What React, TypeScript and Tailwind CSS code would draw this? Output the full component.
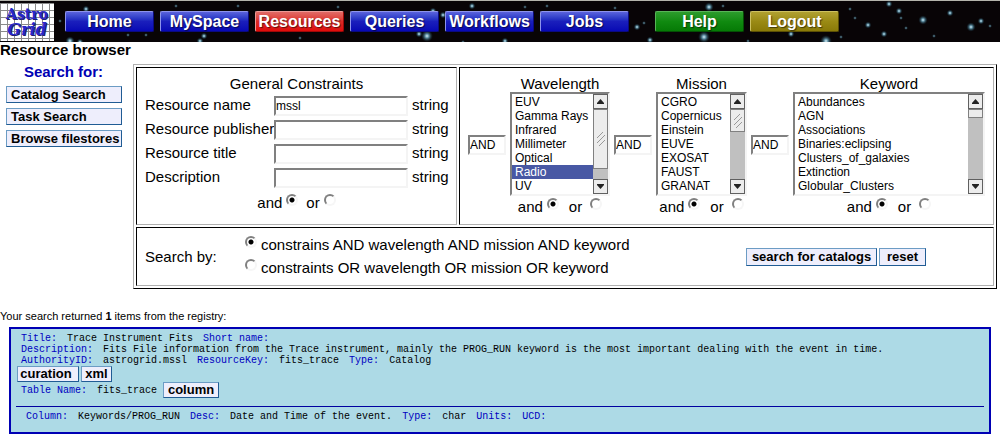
import React from "react";

type NavItem = { label: string; tone: "blue" | "red" | "green" | "gold" };

const TONES: Record<NavItem["tone"], string> = {
  blue: "from-[#5a62dc] via-[#1a1ebc] to-[#0808b4] border-t-[#8d93ec] border-l-[#8d93ec] border-r-[#0a0a80] border-b-[#0a0a80]",
  red: "from-[#e06a66] via-[#dc2a26] to-[#e00a0a] border-t-[#ec9a96] border-l-[#ec9a96] border-r-[#a00808] border-b-[#a00808]",
  green: "from-[#2c9c2c] via-[#108a10] to-[#067a06] border-t-[#58b458] border-l-[#58b458] border-r-[#045004] border-b-[#045004]",
  gold: "from-[#b0a030] via-[#9a8a14] to-[#8a7a08] border-t-[#ccc060] border-l-[#ccc060] border-r-[#5c5004] border-b-[#5c5004]",
};

const MAIN_NAV: NavItem[] = [
  { label: "Home", tone: "blue" },
  { label: "MySpace", tone: "blue" },
  { label: "Resources", tone: "red" },
  { label: "Queries", tone: "blue" },
  { label: "Workflows", tone: "blue" },
  { label: "Jobs", tone: "blue" },
];

const SIDE_NAV: NavItem[] = [
  { label: "Help", tone: "green" },
  { label: "Logout", tone: "gold" },
];

const STARS: [number, number, number][] = [
  [86, 8, 2], [70, 40, 3], [80, 41, 2], [128, 34, 1], [146, 34, 1], [176, 5, 1], [200, 40, 2], [204, 35, 2],
  [238, 5, 1], [300, 37, 1], [338, 6, 1], [433, 10, 2], [443, 14, 2], [427, 35, 4], [419, 33, 2], [472, 5, 2],
  [463, 41, 1], [505, 40, 2], [525, 6, 1], [547, 5, 1], [615, 7, 1], [637, 26, 2], [650, 39, 2], [644, 22, 1],
  [709, 6, 3], [723, 5, 1], [704, 36, 4], [748, 40, 1], [791, 33, 2], [826, 40, 4], [841, 36, 1], [850, 8, 1],
  [868, 24, 2], [884, 33, 2], [889, 3, 2], [899, 10, 2], [901, 17, 1], [906, 27, 1], [923, 19, 3], [950, 12, 2],
  [971, 26, 3], [981, 20, 2], [990, 25, 1], [855, 17, 1], [934, 35, 1], [60, 20, 1],
];

function NavLink({ label, tone }: NavItem) {
  return (
    <a
      href="#"
      className={
        "flex h-[21px] w-[89px] items-center justify-center rounded-xs border bg-linear-to-b text-base leading-4 font-bold text-white [text-shadow:1px_1px_1px_#00000090] " +
        TONES[tone]
      }
    >
      {label}
    </a>
  );
}

function Header() {
  return (
    <header className="relative flex h-[42px] items-center overflow-hidden border-t border-[#b4b4ac] bg-[#080406]">
      <svg
        className="absolute inset-0 h-full w-full"
        viewBox="0 0 1000 41"
        preserveAspectRatio="xMidYMid slice"
        aria-hidden="true"
      >
        <defs>
          <radialGradient id="star">
            <stop offset="0" stopColor="#e4f8ff" />
            <stop offset="0.3" stopColor="#6a9fb4" />
            <stop offset="1" stopColor="#0c2c3c" stopOpacity="0" />
          </radialGradient>
        </defs>
        {STARS.map(([x, y, r]) => (
          <circle key={`${x}-${y}`} cx={x} cy={y} r={r * 1.3 + 0.8} fill="url(#star)" opacity={r < 2 ? 0.6 : 0.95} />
        ))}
      </svg>
      <a
        href="#"
        className="relative flex h-[38px] w-[54px] flex-col items-center justify-center bg-white bg-[linear-gradient(#8a8a8a_1px,transparent_1px),linear-gradient(90deg,#8a8a8a_1px,transparent_1px)] bg-size-[7px_7px] font-['DejaVu_Serif',serif] text-sm leading-4 font-bold text-[#2828cc] [text-shadow:1px_1px_0_#202070]"
      >
        <span>Astro</span>
        <span className="text-base leading-4 italic">Grid</span>
      </a>
      <nav className="relative flex gap-[26px] pl-[11px]">
        <div className="flex gap-1.5">
          {MAIN_NAV.map((n) => (
            <NavLink key={n.label} {...n} />
          ))}
        </div>
        <div className="flex gap-1.5">
          {SIDE_NAV.map((n) => (
            <NavLink key={n.label} {...n} />
          ))}
        </div>
      </nav>
    </header>
  );
}

const BUTTON =
  "border border-t-[#6c9cc4] border-l-[#6c9cc4] border-r-[#205c94] border-b-[#205c94] bg-[#eeeefc] font-bold text-black whitespace-nowrap";
const SUNKEN = "border-2 border-t-[#808080] border-l-[#808080] border-r-[#f4f4f4] border-b-[#f4f4f4] bg-white";
const CELL = "border border-t-black border-l-black border-r-[#b0b0b0] border-b-[#b0b0b0]";

function Radio({ name, value, on }: { name: string; value: string; on?: boolean }) {
  return (
    <input
      type="radio"
      name={name}
      value={value}
      defaultChecked={on}
      className="size-3 shrink-0 appearance-none rounded-full border-2 border-t-[#808080] border-l-[#808080] border-r-[#f6f6f6] border-b-[#f6f6f6] bg-white checked:bg-[radial-gradient(circle,#000_2px,transparent_3px)]"
    />
  );
}

function AndOr({ name, wide }: { name: string; wide?: boolean }) {
  return (
    <div className={"flex justify-center " + (wide ? "gap-2.5" : "gap-2")}>
      <label className="flex gap-1">
        and <Radio name={name} value="and" on />
      </label>
      <label className={"flex " + (wide ? "gap-2" : "gap-1")}>
        or <Radio name={name} value="or" />
      </label>
    </div>
  );
}

function ArrowButton({ down }: { down?: boolean }) {
  return (
    <div className="flex h-[15px] shrink-0 items-center justify-center border border-[#606060] bg-[#ececec]">
      <svg width="7" height="5" viewBox="0 0 7 5" aria-hidden="true">
        <path d={down ? "M0 0h7v1L3.5 5 0 1z" : "M3.5 0 7 4v1H0V4z"} fill="#222" />
      </svg>
    </div>
  );
}

function ScrollBar({ thumb }: { thumb: "large" | "medium" | "small" }) {
  const height = { large: "h-[60px]", medium: "h-[23px]", small: "h-[9px]" }[thumb];
  return (
    <div className="flex w-[15px] shrink-0 flex-col bg-[#c0c0c0]" aria-hidden="true">
      <ArrowButton />
      <div className={"flex items-center justify-center border border-[#808080] bg-[#ececec] " + height}>
        {thumb !== "small" && (
          <svg width="8" height="16" viewBox="0 0 8 16">
            <path d="M0 7 6 1M0 12 8 4M2 15 8 9" stroke="#999" fill="none" />
          </svg>
        )}
      </div>
      <div className="grow" />
      <ArrowButton down />
    </div>
  );
}

type ListProps = {
  title: string;
  options: string[];
  selected?: string;
  thumb: "large" | "medium" | "small";
  className: string;
};

function ListColumn({ title, options, selected, thumb, className }: ListProps) {
  const id = title.toLowerCase();
  return (
    <div className={"flex min-w-0 flex-col " + className}>
      <label htmlFor={id} className="text-center leading-4">
        {title}
      </label>
      <div className={"flex h-[104px] " + SUNKEN}>
        <select
          id={id}
          multiple
          size={7}
          defaultValue={selected ? [selected] : []}
          className="h-[100px] min-w-0 grow overflow-y-auto py-px text-xs [scrollbar-width:none]"
        >
          {options.map((o) => (
            <option
              key={o}
              className="h-3.5 min-h-0 px-[3px] py-0 leading-[14px] checked:bg-[linear-gradient(#4858a4,#4858a4)] checked:[-webkit-text-fill-color:#fff]"
            >
              {o}
            </option>
          ))}
        </select>
        <ScrollBar thumb={thumb} />
      </div>
      <div className="pt-0.5">
        <AndOr name={id + "-op"} wide />
      </div>
    </div>
  );
}

function Joiner({ label }: { label: string }) {
  return (
    <input
      aria-label={label}
      defaultValue="AND"
      className={"mt-[59px] h-5 w-[38px] shrink-0 text-xs " + SUNKEN}
    />
  );
}

const FIELDS: [string, string][] = [
  ["Resource name", "mssl"],
  ["Resource publisher", ""],
  ["Resource title", ""],
  ["Description", ""],
];

function Constraints() {
  return (
    <section className={"flex w-[321px] shrink-0 flex-col px-2 pt-2 pb-3 " + CELL}>
      <h2 className="text-center leading-4">General Constraints</h2>
      <div className="flex flex-col gap-1 pt-1">
        {FIELDS.map(([label, value]) => (
          <div key={label} className="flex h-5 gap-1 leading-[18px]">
            <label htmlFor={label} className="w-[125px] shrink-0 whitespace-nowrap">
              {label}
            </label>
            <input id={label} defaultValue={value} className={"h-5 w-[134px] shrink-0 text-xs " + SUNKEN} />
            <span>string</span>
          </div>
        ))}
      </div>
      <div className="pt-1.5">
        <AndOr name="general-op" />
      </div>
    </section>
  );
}

function Lists() {
  return (
    <section className={"flex min-w-0 grow gap-1 px-2 pt-2 " + CELL}>
      <Joiner label="Wavelength operator" />
      <ListColumn
        title="Wavelength"
        options={["EUV", "Gamma Rays", "Infrared", "Millimeter", "Optical", "Radio", "UV"]}
        selected="Radio"
        thumb="large"
        className="w-[100px] shrink-0"
      />
      <Joiner label="Mission operator" />
      <ListColumn
        title="Mission"
        options={["CGRO", "Copernicus", "Einstein", "EUVE", "EXOSAT", "FAUST", "GRANAT"]}
        thumb="medium"
        className="w-[91px] shrink-0"
      />
      <Joiner label="Keyword operator" />
      <ListColumn
        title="Keyword"
        options={[
          "Abundances",
          "AGN",
          "Associations",
          "Binaries:eclipsing",
          "Clusters_of_galaxies",
          "Extinction",
          "Globular_Clusters",
        ]}
        thumb="small"
        className="grow"
      />
    </section>
  );
}

function SearchBy() {
  return (
    <section className={"flex items-center px-2 py-2 " + CELL}>
      <span className="w-[100px]">Search by:</span>
      <div className="flex grow flex-col gap-[5px]">
        <label className="flex gap-1">
          <Radio name="search-by" value="and" on />
          constrains AND wavelength AND mission AND keyword
        </label>
        <label className="flex gap-1">
          <Radio name="search-by" value="or" />
          constraints OR wavelength OR mission OR keyword
        </label>
      </div>
      <div className="flex gap-0.5 pr-[59px] text-[13px] leading-4">
        <button type="button" className={"w-[131px] " + BUTTON}>search for catalogs</button>
        <button type="reset" className={"w-[47px] " + BUTTON}>reset</button>
      </div>
    </section>
  );
}

function Pair({ label, value }: { label: string; value?: string }) {
  return (
    <>
      <span className="text-[#0000c0]">{label}:</span>
      {value && <span>{value}</span>}
    </>
  );
}

function Results() {
  return (
    <section className="mx-[9px] border-2 border-[#0000b4] bg-[#addae6] px-[5px] pt-1 pb-2.5 font-['Liberation_Mono',monospace] text-[10px] leading-[11px] whitespace-nowrap">
      <div className="flex gap-2.5 pl-[5px]">
        <Pair label="Title" value="Trace Instrument Fits" />
        <Pair label="Short name" />
      </div>
      <div className="flex gap-2.5 pl-[5px]">
        <Pair
          label="Description"
          value="Fits File information from the Trace instrument, mainly the PROG_RUN keyword is the most important dealing with the event in time."
        />
      </div>
      <div className="flex gap-2.5 pl-[5px]">
        <Pair label="AuthorityID" value="astrogrid.mssl" />
        <Pair label="ResourceKey" value="fits_trace" />
        <Pair label="Type" value="Catalog" />
      </div>
      <div className="flex gap-0.5 pl-px font-['Liberation_Sans',sans-serif] text-[13px] leading-[14px]">
        <button type="button" className={"w-[62px] pr-1 " + BUTTON}>curation</button>
        <button type="button" className={"w-[31px] " + BUTTON}>xml</button>
      </div>
      <div className="flex items-center gap-1.5 pl-[5px]">
        <div className="flex gap-2.5">
          <Pair label="Table Name" value="fits_trace" />
        </div>
        <button
          type="button"
          className={"w-14 font-['Liberation_Sans',sans-serif] text-[13px] leading-[14px] " + BUTTON}
        >
          column
        </button>
      </div>
      <hr className="mt-2 border-[#0000a0]" />
      <div className="flex gap-2.5 pt-1 pl-2.5">
        <Pair label="Column" value="Keywords/PROG_RUN" />
        <Pair label="Desc" value="Date and Time of the event." />
        <Pair label="Type" value="char" />
        <Pair label="Units" />
        <Pair label="UCD" />
      </div>
    </section>
  );
}

export default function App() {
  return (
    <div className="bg-white font-['Liberation_Sans',sans-serif] text-[15px] leading-[18px] text-black">
      <Header />
      <h1 className="leading-4 font-bold">Resource browser</h1>
      <main>
        <form className="flex pt-1.5 pr-[3px]">
          <aside className="flex w-[133px] shrink-0 flex-col gap-[5px] px-1.5">
            <h2 className="pr-1.5 pb-px text-center leading-4 font-bold text-[#0000b4]">Search for:</h2>
            {["Catalog Search", "Task Search", "Browse filestores"].map((t) => (
              <button
                key={t}
                type="button"
                className={"h-[17px] w-[116px] pl-1 text-left text-[13px] leading-[14px] " + BUTTON}
              >
                {t}
              </button>
            ))}
          </aside>
          <div className="flex min-w-0 grow flex-col gap-0.5 border border-t-[#b0b0b0] border-l-[#b0b0b0] border-r-black border-b-black p-0.5">
            <div className="flex gap-0.5">
              <Constraints />
              <Lists />
            </div>
            <SearchBy />
          </div>
        </form>
        <p className="pt-[18px] pb-0.5 text-[11px]">
          Your search returned <b>1</b> items from the registry:
        </p>
        <Results />
      </main>
    </div>
  );
}
